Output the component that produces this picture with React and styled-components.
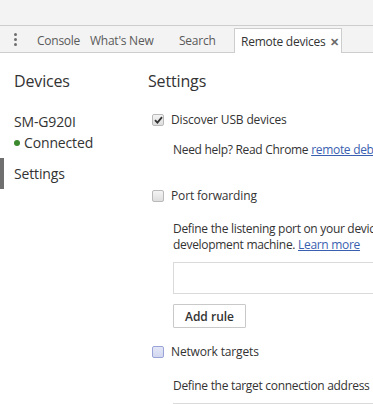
import React from 'react';
import styled, { createGlobalStyle } from 'styled-components';

const GlobalStyle = createGlobalStyle`
    html, body {
        margin: 0;
        padding: 0;
        background: #fff;
    }
    body {
        font-family: 'Open Sans', 'Noto Sans', 'Liberation Sans', sans-serif;
        color: #333;
        letter-spacing: -0.15px;
    }
`;

const Root = styled.div`
    width: 373px;
    height: 404px;
    overflow: hidden;
    background: #fff;
`;

const TopStrip = styled.div`
    height: 25px;
    background: #f3f3f3;
    border-bottom: 1px solid #cdcdcd;
`;

const Toolbar = styled.div`
    display: flex;
    align-items: flex-end;
    height: 27px;
    background: #f3f3f3;
    border-bottom: 1px solid #cdcdcd;
    box-sizing: border-box;
`;

const Menu = styled.div`
    width: 30px;
    display: flex;
    flex-direction: column;
    align-items: center;
    justify-content: center;
    gap: 2px;
    align-self: stretch;
    span {
        display: block;
        width: 3px;
        height: 3px;
        border-radius: 50%;
        background: #6e6e6e;
    }
`;

const Tab = styled.div`
    box-sizing: border-box;
    width: ${props => props.width}px;
    height: ${props => (props.active ? 25 : 24)}px;
    margin-bottom: ${props => (props.active ? -1 : 0)}px;
    padding-left: 6px;
    display: flex;
    align-items: center;
    font-size: 12px;
    letter-spacing: -0.25px;
    white-space: nowrap;
    color: ${props => (props.active ? '#333' : '#5a5a5a')};
    background: ${props => (props.active ? '#fff' : 'transparent')};
    border: 1px solid ${props => (props.active ? '#cdcdcd' : 'transparent')};
    border-bottom: none;
`;

const Close = styled.span`
    margin-left: 5px;
    font-size: 11px;
    font-weight: bold;
    color: #6b6b6b;
`;

const Body = styled.div`
    display: flex;
`;

const Sidebar = styled.div`
    width: 148px;
    flex: none;
    padding-top: 18px;
`;

const Title = styled.h2`
    margin: 0;
    font-size: 16px;
    line-height: 20px;
    font-weight: normal;
    color: #333;
    padding-left: ${props => props.indent || 0}px;
`;

const DeviceName = styled.div`
    margin-top: 22px;
    padding-left: 14px;
    font-size: 14px;
    line-height: 18px;
`;

const Status = styled.div`
    margin-top: 3px;
    padding-left: 14px;
    font-size: 14px;
    line-height: 18px;
    display: flex;
    align-items: center;
    i {
        width: 6px;
        height: 6px;
        border-radius: 50%;
        background: #3b8a2e;
        margin-right: 4px;
    }
`;

const SideItem = styled.div`
    margin-top: 6px;
    height: 31px;
    display: flex;
    align-items: center;
    padding-left: 10px;
    font-size: 14px;
    border-left: 4px solid ${props => (props.active ? '#6f6f6f' : 'transparent')};
`;

const Main = styled.div`
    flex: none;
    width: 560px;
    padding-top: 18px;
`;

const Option = styled.label`
    display: flex;
    align-items: center;
    margin-top: ${props => props.top}px;
    padding-left: 4px;
    font-size: 12px;
    line-height: 16px;
`;

const Box = styled.span`
    box-sizing: border-box;
    width: 12px;
    height: 12px;
    margin-right: 7px;
    border-radius: 2px;
    border: 1px solid ${props => (props.focus ? '#9aa3d6' : '#b9b9b9')};
    background: ${props =>
        props.focus
            ? 'linear-gradient(#e4e7f7, #d2d7f0)'
            : 'linear-gradient(#f4f4f4, #dedede)'};
    display: flex;
    align-items: center;
    justify-content: center;
`;

const Text = styled.p`
    margin: ${props => props.top}px 0 0;
    padding-left: 25px;
    font-size: 12px;
    line-height: 16px;
    letter-spacing: -0.3px;
    white-space: nowrap;
    a {
        color: #3a5fb0;
        text-decoration: underline;
    }
`;

const Input = styled.div`
    box-sizing: border-box;
    margin: 9px 0 0 25px;
    width: 420px;
    height: 32px;
    border: 1px solid #dadada;
    background: #fff;
`;

const Button = styled.button`
    box-sizing: border-box;
    margin: 10px 0 0 25px;
    width: 73px;
    height: 24px;
    border: 1px solid #c9c9c9;
    border-radius: 1px;
    background: #fff;
    font-family: inherit;
    font-size: 12px;
    font-weight: 600;
    color: #333;
    padding: 0;
`;

const Check = () => (
    <svg width="9" height="8" viewBox="0 0 9 8">
        <path d="M1 4.2 L3.4 6.6 L8 1.2" fill="none" stroke="#333" strokeWidth="1.8" />
    </svg>
);

export default () => (
    <Root>
        <GlobalStyle />
        <TopStrip />
        <Toolbar>
            <Menu>
                <span />
                <span />
                <span />
            </Menu>
            <Tab width={53}>Console</Tab>
            <Tab width={89}>What's New</Tab>
            <Tab width={62}>Search</Tab>
            <Tab width={108} active>
                Remote devices<Close>✕</Close>
            </Tab>
        </Toolbar>
        <Body>
            <Sidebar>
                <Title indent={14}>Devices</Title>
                <DeviceName>SM-G920I</DeviceName>
                <Status>
                    <i />
                    Connected
                </Status>
                <SideItem active>Settings</SideItem>
            </Sidebar>
            <Main>
                <Title>Settings</Title>
                <Option top={21}>
                    <Box>
                        <Check />
                    </Box>
                    Discover USB devices
                </Option>
                <Text top={14}>
                    Need help? Read Chrome <a href="#">remote debugging documentation.</a>
                </Text>
                <Option top={30}>
                    <Box />
                    Port forwarding
                </Option>
                <Text top={17}>
                    Define the listening port on your device that maps to a port accessible from your
                    <br />
                    development machine. <a href="#">Learn more</a>
                </Text>
                <Input />
                <Button>Add rule</Button>
                <Option top={16}>
                    <Box focus />
                    Network targets
                </Option>
                <Text top={18}>Define the target connection address</Text>
                <Input />
            </Main>
        </Body>
    </Root>
);
